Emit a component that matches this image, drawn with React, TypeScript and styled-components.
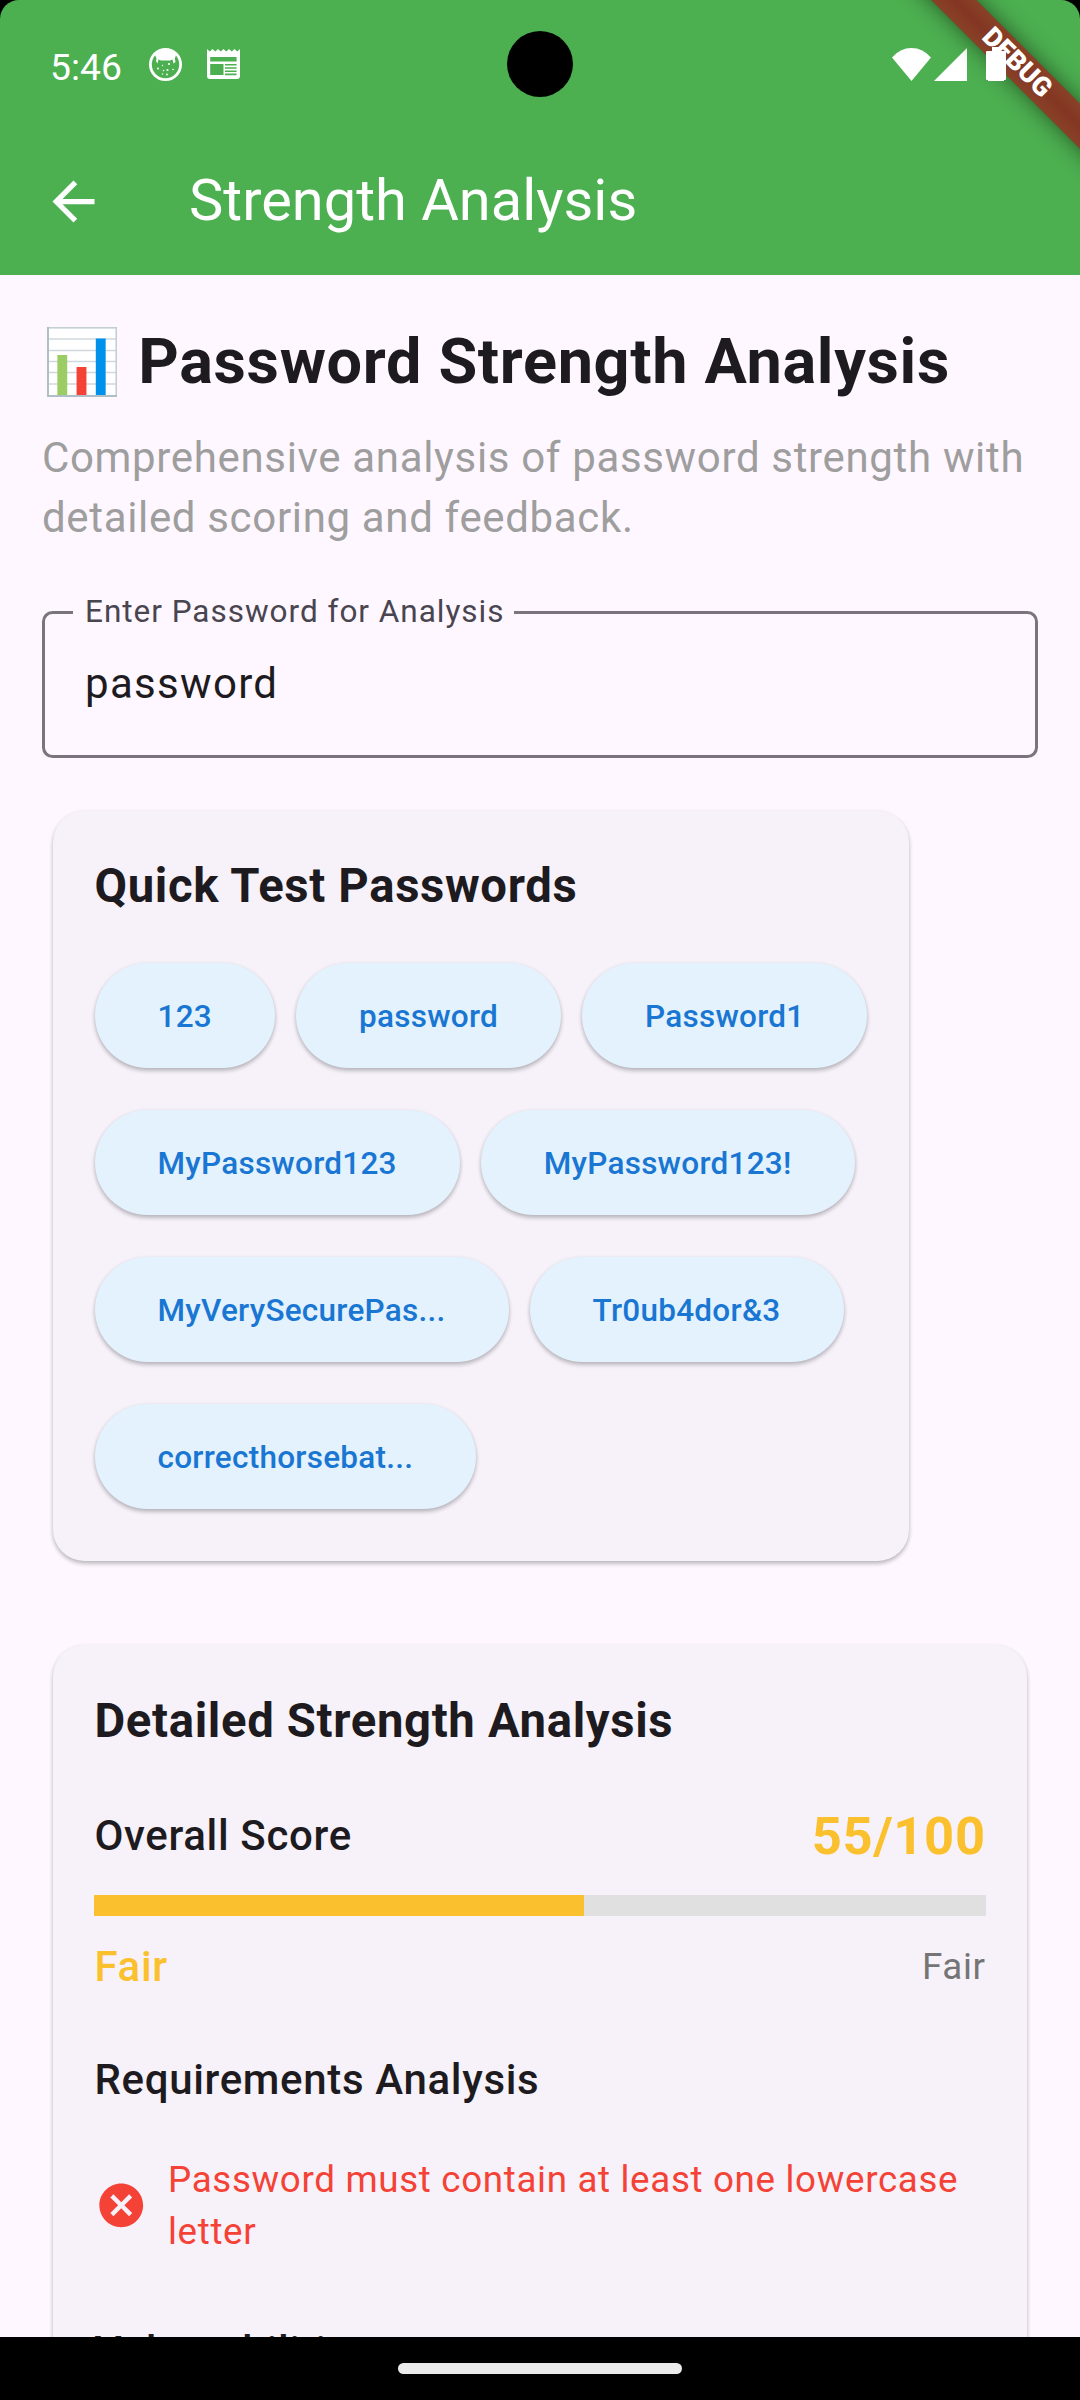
import React from "react";
import styled, { createGlobalStyle } from "styled-components";

const GlobalStyle = createGlobalStyle`
  html, body { margin: 0; padding: 0; background: #000; }
  * { box-sizing: border-box; }
`;

const Screen = styled.div`
  position: relative;
  width: 1080px;
  height: 2400px;
  overflow: hidden;
  display: flex;
  flex-direction: column;
  background: #000;
  color: #1d1b20;
  font-family: Roboto, "Liberation Sans", sans-serif;
`;

const Header = styled.header`
  flex: none;
  height: 275px;
  background: #4caf50;
  color: #fff;
  border-radius: 19px 19px 0 0;
`;

const StatusBar = styled.div`
  height: 128px;
  display: flex;
  align-items: center;
  padding: 0 74px 0 50px;
`;

const Clock = styled.span`
  font-size: 37.3px;
  line-height: 44px;
  width: 98.5px;
  margin-top: 5px;
`;

const StatusIcon = styled.svg<{ $gap?: number }>`
  display: block;
  flex: none;
  margin-left: ${(p) => p.$gap ?? 0}px;
`;

const Spacer = styled.div`
  flex: 1;
`;

const BatteryIcon = styled(StatusIcon)`
  position: relative;
  z-index: 2;
`;

const Cutout = styled.div`
  position: absolute;
  left: 507px;
  top: 31px;
  width: 66px;
  height: 66px;
  border-radius: 50%;
  background: #000;
`;

const Ribbon = styled.div`
  position: absolute;
  left: 877px;
  top: 46.5px;
  width: 280px;
  height: 31.5px;
  transform: rotate(45deg);
  background:
    linear-gradient(rgba(183, 28, 28, 0.63), rgba(183, 28, 28, 0.63)),
    linear-gradient(rgba(0, 0, 0, 0.25), rgba(0, 0, 0, 0.44) 50%, rgba(0, 0, 0, 0.25));
  box-shadow: 0 0 21px rgba(0, 0, 0, 0.5);
  display: flex;
  align-items: center;
  justify-content: center;
  color: #fff;
  font-size: 26.8px;
  font-weight: 900;
  line-height: 31px;
`;

const AppBar = styled.div`
  height: 147px;
  display: flex;
  align-items: center;
  padding-left: 42px;
`;

const BarTitle = styled.h1`
  margin: 0 0 3px 84px;
  font-size: 57.75px;
  font-weight: 400;
  line-height: 74px;
`;

const Body = styled.main`
  flex: 1;
  min-height: 0;
  overflow: hidden;
  background: #fef7ff;
  padding: 45px 42px 0;
`;

const PageTitle = styled.h2`
  margin: 0;
  display: flex;
  align-items: center;
  font-size: 63px;
  font-weight: 700;
  line-height: 84px;
  letter-spacing: 0.66px;
  white-space: nowrap;
`;

const ChartIcon = styled.svg`
  display: block;
  flex: none;
  margin: 0 21.3px 0 5px;
`;

const Lead = styled.p`
  margin: 24px 0 0;
  font-size: 42px;
  line-height: 60px;
  letter-spacing: 0.66px;
  color: #9e9e9e;
`;

const Field = styled.div`
  position: relative;
  margin-top: 63px;
  height: 147px;
  border: 3px solid #79747e;
  border-radius: 10.5px;
  padding: 45px 40px 0;
  font-size: 42px;
  line-height: 50px;
  letter-spacing: 1.31px;
`;

const FieldLabel = styled.label`
  position: absolute;
  left: 28px;
  top: -21px;
  width: 441px;
  padding-left: 12px;
  background: #fef7ff;
  color: #49454f;
  font-size: 31.5px;
  line-height: 38px;
  letter-spacing: 0.98px;
  white-space: nowrap;
`;

const Card = styled.section<{ $width: number; $top: number; $height: number }>`
  width: ${(p) => p.$width}px;
  height: ${(p) => p.$height}px;
  margin: ${(p) => p.$top}px 0 0 10.5px;
  padding: 42px;
  background: #f7f2fa;
  border-radius: 31.5px;
  box-shadow: 0 3px 4px rgba(0, 0, 0, 0.2), 0 1px 4px rgba(0, 0, 0, 0.1);
`;

const CardTitle = styled.h3<{ $line: number }>`
  margin: 0;
  font-size: 47.25px;
  font-weight: 700;
  line-height: ${(p) => p.$line}px;
  letter-spacing: 0.66px;
`;

const Chips = styled.div`
  display: flex;
  flex-wrap: wrap;
  gap: 42px 21px;
  margin: 44px -10px 0 0;
`;

const Chip = styled.button`
  height: 105px;
  border: 0;
  border-radius: 52.5px;
  padding: 2px 63px 0;
  background: #e3f2fd;
  color: #1976d2;
  font-family: inherit;
  font-size: 31.5px;
  font-weight: 500;
  line-height: 45px;
  letter-spacing: 0.26px;
  white-space: nowrap;
  box-shadow: 0 3px 4px rgba(0, 0, 0, 0.2), 0 1px 4px rgba(0, 0, 0, 0.1);
`;

const Row = styled.div<{ $top: number }>`
  display: flex;
  align-items: center;
  justify-content: space-between;
  margin-top: ${(p) => p.$top}px;
`;

const Label = styled.span<{ $color?: string }>`
  font-size: 42px;
  font-weight: 500;
  line-height: 60px;
  letter-spacing: 0.66px;
  color: ${(p) => p.$color ?? "inherit"};
`;

const Score = styled.span`
  margin: 0 -0.7px 1px 0;
  font-size: 52.5px;
  font-weight: 700;
  line-height: 74px;
  letter-spacing: 0.66px;
  color: #fbc02d;
`;

const Caption = styled.span`
  margin: 1px -0.7px 0 0;
  font-size: 36.75px;
  line-height: 52.5px;
  letter-spacing: 0.66px;
  color: #757575;
`;

const Track = styled.div`
  height: 21px;
  margin: 21.5px -0.5px 0 -0.5px;
  background: #e0e0e0;
`;

const Fill = styled.div`
  height: 100%;
  background: #fbc02d;
`;

const SubTitle = styled.h4<{ $top: number }>`
  margin: ${(p) => p.$top}px 0 0;
  font-size: 42px;
  font-weight: 500;
  line-height: 60px;
  letter-spacing: 0.66px;
`;

const Issue = styled.div`
  display: flex;
  align-items: center;
  gap: 21px;
  margin-top: 43px;
  color: #f44336;
  font-size: 36.75px;
  line-height: 52.5px;
  letter-spacing: 0.66px;
`;

const IssueIcon = styled.svg`
  flex: none;
`;

const IssueText = styled.span`
  padding-top: 1px;
`;

const NavBar = styled.footer`
  flex: none;
  height: 63px;
  display: flex;
  justify-content: center;
  padding-top: 26px;
  background: #000;
`;

const Pill = styled.div`
  width: 284px;
  height: 11px;
  border-radius: 6px;
  background: #ebebeb;
`;

const samples = [
  "123",
  "password",
  "Password1",
  "MyPassword123",
  "MyPassword123!",
  "MyVerySecurePas...",
  "Tr0ub4dor&3",
  "correcthorsebat...",
];

const score = 55;

export default function App() {
  return (
    <>
      <GlobalStyle />
      <Screen>
        <Header>
          <StatusBar>
            <Clock>5:46</Clock>
            <StatusIcon width="33" height="33" viewBox="0 0 33 33">
              <circle cx="16.5" cy="16.5" r="15.1" fill="none" stroke="#fff" strokeWidth="2.8" />
              <path
                d="M6 7 Q16.5 -3 27 7 L25.8 11 L26.5 14 L24.5 15.5 L23.5 11.5 Q22 12 21 12.5 H12 Q11 12 9.5 11.5 L8.5 15.5 L7 13 L7.5 10.5Z"
                fill="#fff"
              />
              <g fill="#fff">
                <circle cx="20" cy="16" r="1.1" />
                <circle cx="13.5" cy="17.5" r="0.7" />
                <circle cx="9" cy="20.5" r="1" />
                <circle cx="18.5" cy="22" r="1.1" />
                <circle cx="14.5" cy="22.5" r="0.8" />
                <circle cx="24" cy="21.5" r="0.8" />
                <circle cx="18" cy="26.5" r="0.9" />
                <circle cx="13.5" cy="26" r="0.7" />
              </g>
            </StatusIcon>
            <StatusIcon $gap={25} width="33" height="30" viewBox="0 0 33 30">
              <path
                fillRule="evenodd"
                fill="#fff"
                d="M0 0 L2.75 2.5 L5.5 0 L8.25 2.5 L11 0 L13.75 2.5 L16.5 0 L19.25 2.5 L22 0 L24.75 2.5 L27.5 0 L30.25 2.5 L33 0 V27 Q33 30 30 30 H3 Q0 30 0 27Z M3.2 8V12.5H29.6V8Z M3.2 15V26H16.5V15Z M18 15V16.6H29.6V15Z M18 18.2V19.8H29.6V18.2Z M18 21.4V23H29.6V21.4Z M18 24.6V26.2H29.6V24.6Z"
              />
            </StatusIcon>
            <Spacer />
            <StatusIcon width="39" height="33" viewBox="0 0 39 33">
              <path d="M0 9.5 Q8 0 19.5 0 Q31 0 39 9.5 L19.5 33Z" fill="#fff" />
            </StatusIcon>
            <StatusIcon $gap={3} width="33" height="33" viewBox="0 0 33 33">
              <path d="M33 0V33H0Z" fill="#fff" />
            </StatusIcon>
            <BatteryIcon $gap={19} width="20" height="34" viewBox="0 0 20 34">
              <path d="M6 0H14V4H19Q20 4 20 5V32Q20 33 19 33H18V34H2V33H1Q0 33 0 32V5Q0 4 1 4H6Z" fill="#fff" />
            </BatteryIcon>
          </StatusBar>
          <AppBar>
            <svg width="63" height="63" viewBox="0 0 24 24">
              <path d="M20 11H7.83l5.59-5.59L12 4l-8 8 8 8 1.41-1.41L7.83 13H20v-2z" fill="#fff" />
            </svg>
            <BarTitle>Strength Analysis</BarTitle>
          </AppBar>
        </Header>

        <Body>
          <PageTitle>
            <ChartIcon width="70" height="70" viewBox="0 0 71 70" preserveAspectRatio="none">
              <rect x="1" y="1" width="69" height="68" fill="#fff" />
              <path d="M0 12H71M0 23.5H71M0 34.5H71M0 45.5H71M0 57H71" stroke="#cfd8dc" strokeWidth="1.6" />
              <rect x="0.8" y="0.8" width="69.4" height="68.4" fill="none" stroke="#c3cfd5" strokeWidth="1.6" />
              <path d="M1 0V70M0 69H71" stroke="#b0bec5" strokeWidth="2" />
              <rect x="10.5" y="28" width="10" height="40" fill="#9ccc65" />
              <rect x="30" y="40" width="10" height="28" fill="#f44336" />
              <rect x="49.5" y="11.5" width="10" height="56.5" fill="#0091ea" />
            </ChartIcon>
            Password Strength Analysis
          </PageTitle>
          <Lead>Comprehensive analysis of password strength with detailed scoring and feedback.</Lead>

          <Field>
            <FieldLabel>Enter Password for Analysis</FieldLabel>
            password
          </Field>

          <Card $width={856.5} $height={750} $top={53}>
            <CardTitle $line={66}>Quick Test Passwords</CardTitle>
            <Chips>
              {samples.map((s) => (
                <Chip key={s}>{s}</Chip>
              ))}
            </Chips>
          </Card>

          <Card $width={974.5} $height={1100} $top={84}>
            <CardTitle $line={68}>Detailed Strength Analysis</CardTitle>
            <Row $top={43.5}>
              <Label>Overall Score</Label>
              <Score>{score}/100</Score>
            </Row>
            <Track>
              <Fill style={{ width: `${score}%` }} />
            </Track>
            <Row $top={21}>
              <Label $color="#fbc02d">Fair</Label>
              <Caption>Fair</Caption>
            </Row>
            <SubTitle $top={52.5}>Requirements Analysis</SubTitle>
            <Issue>
              <IssueIcon width="52.5" height="52.5" viewBox="0 0 24 24">
                <path
                  fill="#f44336"
                  d="M12 2C6.47 2 2 6.47 2 12s4.47 10 10 10 10-4.47 10-10S17.53 2 12 2zm5 13.59L15.59 17 12 13.41 8.41 17 7 15.59 10.59 12 7 8.41 8.41 7 12 10.59 15.59 7 17 8.41 13.41 12 17 15.59z"
                />
              </IssueIcon>
              <IssueText>Password must contain at least one lowercase letter</IssueText>
            </Issue>
            <SubTitle $top={63}>Vulnerabilities</SubTitle>
          </Card>
        </Body>

        <NavBar>
          <Pill />
        </NavBar>
        <Cutout />
        <Ribbon>DEBUG</Ribbon>
      </Screen>
    </>
  );
}
